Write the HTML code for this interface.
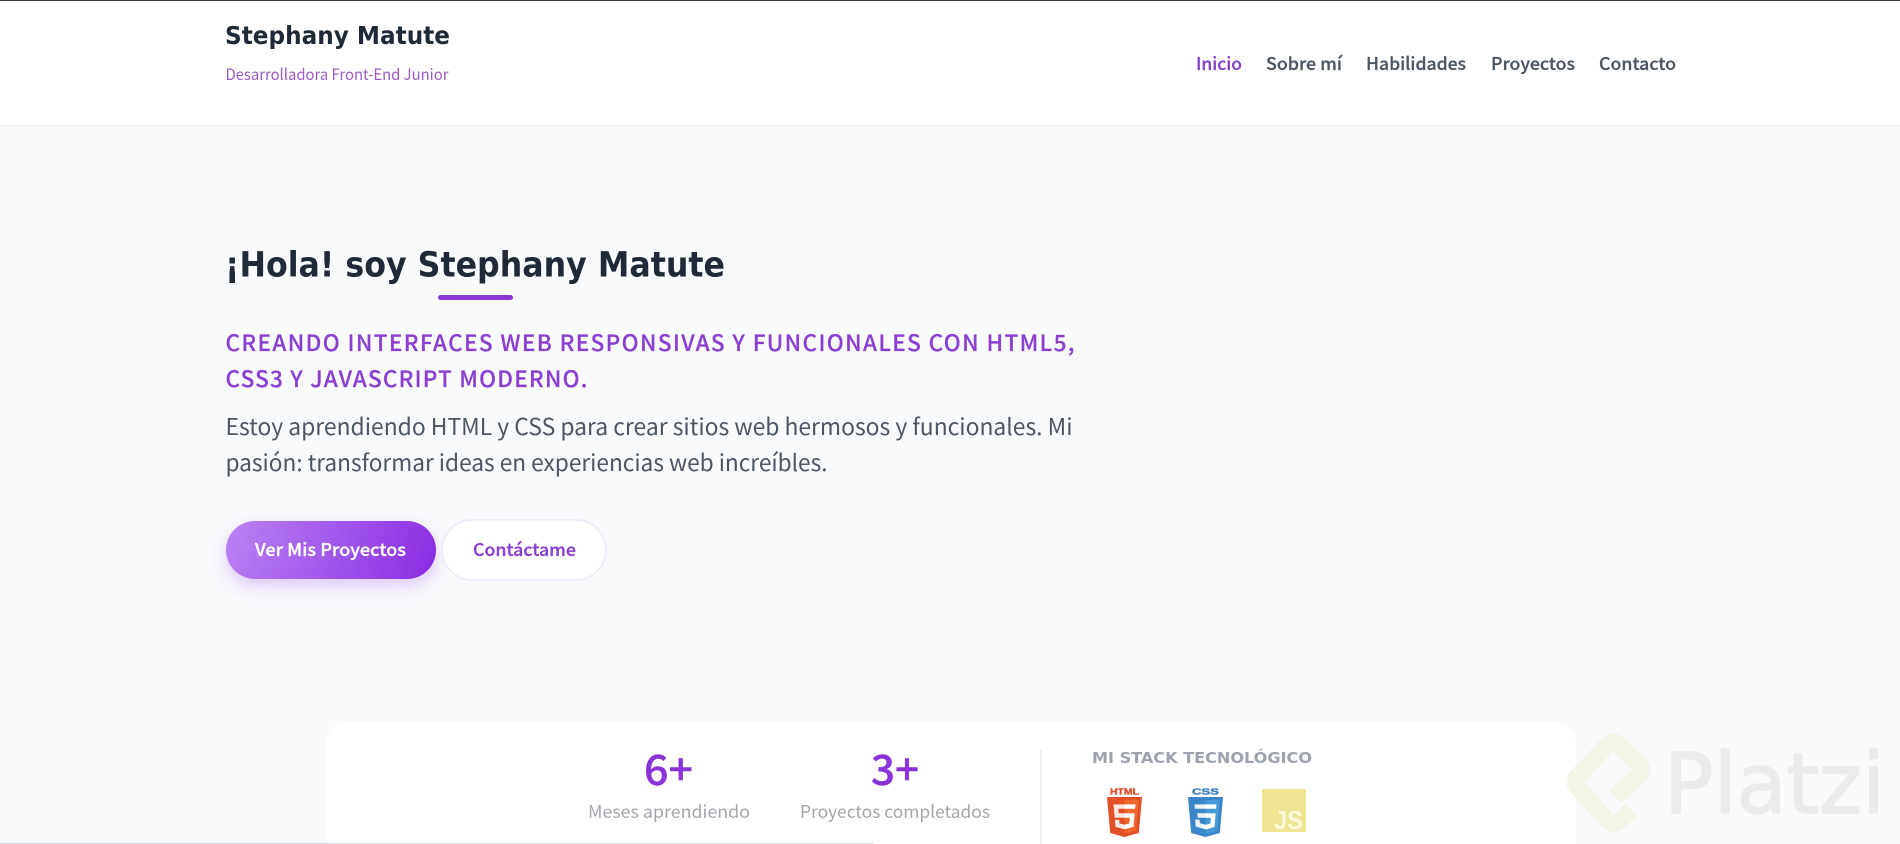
<!DOCTYPE html>
<html lang="es">
<head>
<meta charset="utf-8">
<title>Stephany Matute</title>
<style>
html,body{margin:0;padding:0;width:1900px;height:844px;overflow:hidden;background:#f9fafc}
body{position:relative;font-family:"Liberation Sans","Noto Sans CJK JP",sans-serif}
.abs{position:absolute;box-sizing:border-box}
#top{left:0;top:0;width:1900px;height:1px;background:#3a3a3a;z-index:5}
#head{left:0;top:0;width:1900px;height:126px;background:#fff;border-bottom:1px solid #f0f1f3}
#bar{left:438px;top:295px;width:75px;height:5px;border-radius:3px;background:#8a38d6}
#b1{left:226px;top:521px;width:210px;height:58px;border-radius:29px;background:linear-gradient(110deg,#bb82f3 0%,#a45cec 45%,#8a2be2 100%);box-shadow:0 7px 16px rgba(160,90,235,.3)}
#b2{left:441px;top:519px;width:166px;height:62px;border-radius:31px;background:#fff;border:2px solid #f2ebfa}
#card{left:326px;top:722px;width:1250px;height:140px;border-radius:20px;background:#fff}
#div{left:1040px;top:750px;width:2px;height:94px;background:#f1eafa}
#line{left:0;top:843px;width:873px;height:1px;background:#d6d9dd;z-index:5}
svg.o{position:absolute;left:0;top:0;width:1900px;height:844px}
.os{font-family:"Noto Sans CJK JP","Liberation Sans",sans-serif}
.mo{font-family:"DejaVu Sans","Liberation Sans",sans-serif;font-weight:700}
</style>
</head>
<body>
<div class="abs" id="head"></div>
<div class="abs" id="top"></div>
<div class="abs" id="bar"></div>
<div class="abs" id="b1"></div>
<div class="abs" id="b2"></div>
<div class="abs" id="card"></div>
<div class="abs" id="div"></div>
<svg class="o" viewBox="0 0 1900 844" xmlns="http://www.w3.org/2000/svg">
  <!-- header -->
  <text class="mo" x="225" y="44" font-size="25" fill="#1f2937" textLength="225" lengthAdjust="spacingAndGlyphs">Stephany Matute</text>
  <text class="os" x="225.500" y="80" font-size="15.5" fill="#9b5cc9" textLength="223" lengthAdjust="spacingAndGlyphs">Desarrolladora Front-End Junior</text>
  <g class="os" font-size="17.6" font-weight="500" fill="#4b5563" stroke="#4b5563" stroke-width=".25">
    <text x="1196" y="70" fill="#8440c8" stroke="#8440c8" textLength="46" lengthAdjust="spacingAndGlyphs">Inicio</text>
    <text x="1266" y="70" textLength="76" lengthAdjust="spacingAndGlyphs">Sobre mí</text>
    <text x="1366" y="70" textLength="100" lengthAdjust="spacingAndGlyphs">Habilidades</text>
    <text x="1491" y="70" textLength="84" lengthAdjust="spacingAndGlyphs">Proyectos</text>
    <text x="1599" y="70" textLength="77" lengthAdjust="spacingAndGlyphs">Contacto</text>
  </g>
  <!-- hero -->
  <text class="mo" x="225" y="276.500" font-size="35" fill="#1f2937" textLength="500" lengthAdjust="spacingAndGlyphs">¡Hola! soy Stephany Matute</text>
  <g class="os" font-size="22.5" font-weight="500" fill="#8a3fd1" stroke="#8a3fd1" stroke-width=".2">
    <text x="225.500" y="351" textLength="849" lengthAdjust="spacing">CREANDO INTERFACES WEB RESPONSIVAS Y FUNCIONALES CON HTML5,</text>
    <text x="225.500" y="387" textLength="362" lengthAdjust="spacing">CSS3 Y JAVASCRIPT MODERNO.</text>
  </g>
  <g class="os" font-size="23" fill="#4b5563">
    <text x="225.500" y="435" textLength="847" lengthAdjust="spacingAndGlyphs">Estoy aprendiendo HTML y CSS para crear sitios web hermosos y funcionales. Mi</text>
    <text x="225.500" y="471" textLength="602" lengthAdjust="spacingAndGlyphs">pasión: transformar ideas en experiencias web increíbles.</text>
  </g>
  <text class="os" x="255" y="556" font-size="17.6" font-weight="500" fill="#fff" stroke="#fff" stroke-width=".3" textLength="151" lengthAdjust="spacingAndGlyphs">Ver Mis Proyectos</text>
  <text class="os" x="473" y="556" font-size="17.6" font-weight="500" fill="#8a3fd1" stroke="#8a3fd1" stroke-width=".3" textLength="103" lengthAdjust="spacingAndGlyphs">Contáctame</text>
  <!-- stats -->
  <g class="os" font-size="42" font-weight="500" fill="#8a33d8" stroke="#8a33d8" stroke-width=".4">
    <text x="644" y="785" textLength="49" lengthAdjust="spacingAndGlyphs">6+</text>
    <text x="871" y="785" textLength="48" lengthAdjust="spacingAndGlyphs">3+</text>
  </g>
  <g class="os" font-size="17.6" fill="#a2a6ae">
    <text x="588" y="818" textLength="162" lengthAdjust="spacingAndGlyphs">Meses aprendiendo</text>
    <text x="800" y="818" textLength="190" lengthAdjust="spacingAndGlyphs">Proyectos completados</text>
  </g>
  <text class="mo" x="1092" y="763" font-size="15" fill="#9ca3af" textLength="220" lengthAdjust="spacingAndGlyphs">MI STACK TECNOLÓGICO</text>
  <!-- html5 -->
  <text x="1110" y="794.500" font-family="'Liberation Sans',sans-serif" font-weight="700" font-size="8.5" fill="#e4502a" stroke="#e4502a" stroke-width=".4" textLength="29" lengthAdjust="spacingAndGlyphs">HTML</text>
  <svg x="1107" y="797" width="35" height="40" viewBox="30 0 451 512" preserveAspectRatio="none">
    <path fill="#e34f26" d="M71 460 30 0h451l-41 460-185 52"/>
    <path fill="#ef652a" d="M256 472l149-41 35-394H256"/>
    <path fill="#fbe9e2" d="M256 208h-75l-5-58h80V94H114l15 171h127zm-1 147l-63-17-4-45h-56l7 89 116 32z"/>
    <path fill="#fff" d="M255 208v57h70l-7 73-63 17v59l116-32 16-174zm0-114v56h137l5-56z"/>
  </svg>
  <!-- css3 -->
  <text x="1192" y="794.500" font-family="'Liberation Sans',sans-serif" font-weight="700" font-size="8.5" fill="#3b7fc0" stroke="#3b7fc0" stroke-width=".4" textLength="27" lengthAdjust="spacingAndGlyphs">CSS</text>
  <svg x="1188" y="797" width="35" height="40" viewBox="30 0 451 512" preserveAspectRatio="none">
    <path fill="#3a86c8" d="M71 460 30 0h451l-41 460-185 52"/>
    <path fill="#479ad8" d="M256 472l149-41 35-394H256"/>
    <path fill="#ebf3f9" d="M256 208H150l4 58h102zm0-114H114l5 56h137zm0 261l-72-20-4-45h-58l8 89 126 35z"/>
    <path fill="#fff" d="M255 208v57h70l-7 73-63 19v59l116-32 16-174zm0-114v56h137l5-56z"/>
  </svg>
  <!-- js -->
  <rect x="1262" y="789" width="44" height="43" fill="#f0e593"/>
  <text x="1274" y="829" font-family="'Liberation Sans',sans-serif" font-size="26" font-weight="700" fill="#fdf9dd" textLength="29" lengthAdjust="spacingAndGlyphs">JS</text>
  <!-- watermark -->
  <path d="M1615 797 L1639 775 Q1645 770 1639 764 L1619 745 Q1613 739 1607 745 L1578 776 Q1572 782 1578 788 L1607 820 Q1613 826 1619 821 L1631 810" fill="none" stroke="#f1f6e6" stroke-width="17" stroke-linejoin="round"/>
  <text x="1664" y="813" font-family="'DejaVu Sans',sans-serif" font-size="84" fill="#eaebed" stroke="#eaebed" stroke-width="1.5" textLength="221" lengthAdjust="spacingAndGlyphs">Platzi</text>
</svg>
<div class="abs" id="line"></div>
</body>
</html>
